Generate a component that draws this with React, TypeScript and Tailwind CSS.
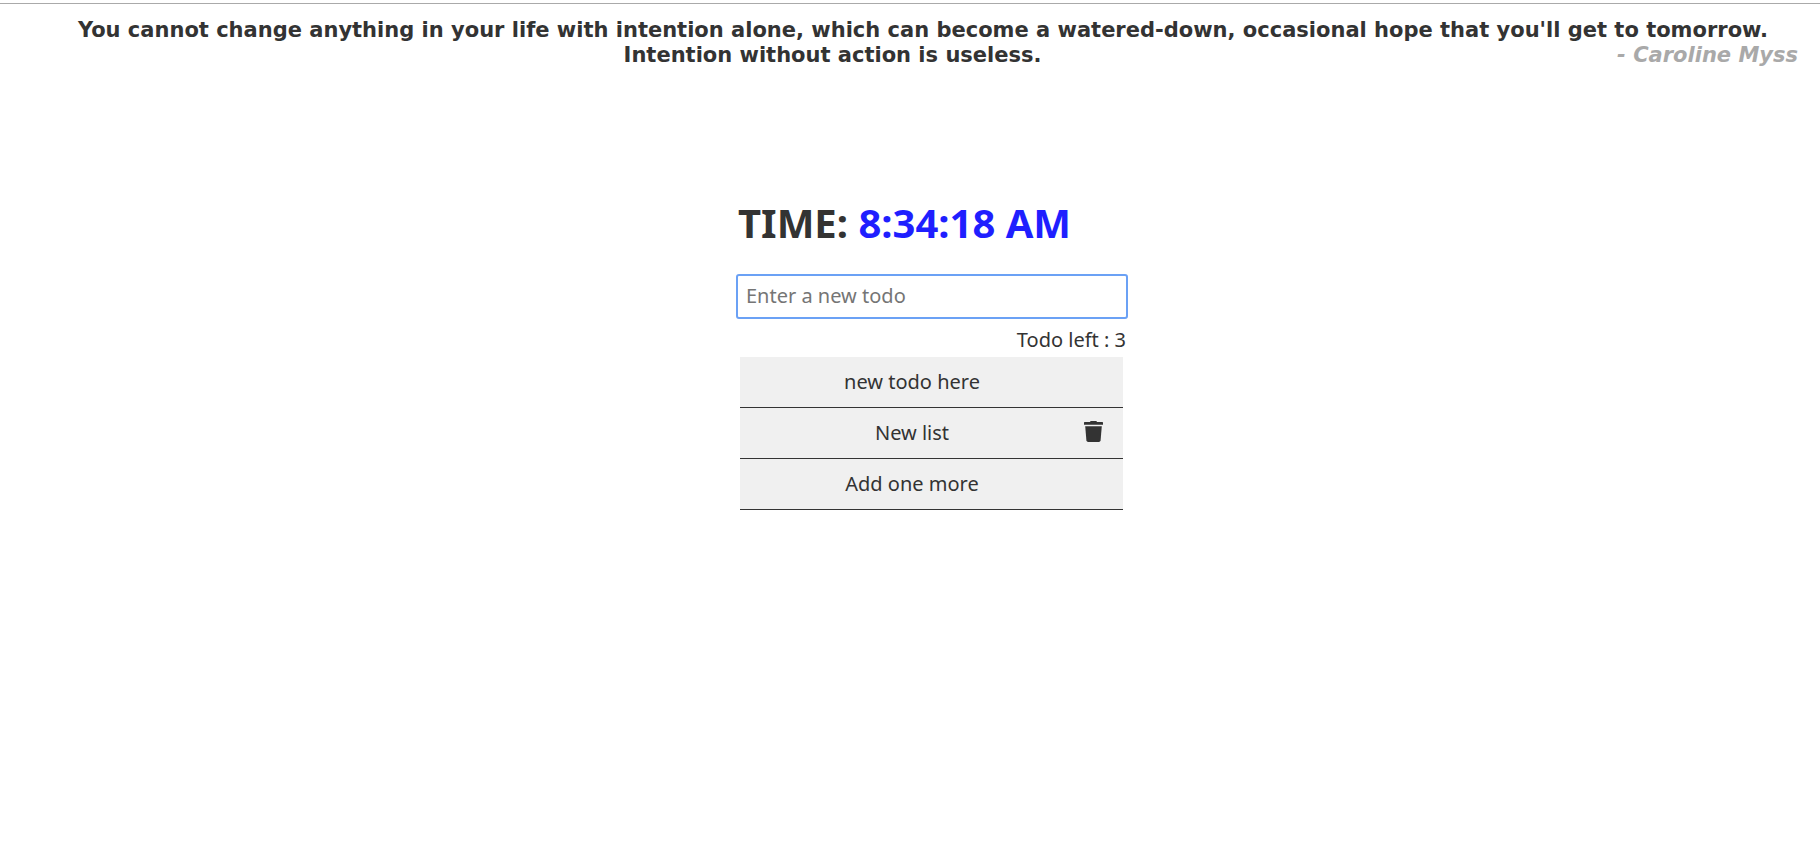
import { useState } from 'react';

type Todo = { id: number; title: string; removable: boolean };

const initialTodos: Todo[] = [
  { id: 1, title: 'new todo here', removable: false },
  { id: 2, title: 'New list', removable: true },
  { id: 3, title: 'Add one more', removable: false },
];

function TrashIcon() {
  return (
    <svg viewBox="0 0 19 21" className="h-[21px] w-[19px]" fill="currentColor" aria-hidden="true">
      <path d="M6 1Q6.2 0 7 0H12Q12.8 0 13 1H18.4Q19 1 19 1.7V3.8H0V1.7Q0 1 0.6 1Z" />
      <path d="M1.2 5.2H17.8L16.6 19.3Q16.4 21 14.8 21H4.2Q2.6 21 2.4 19.3Z" />
    </svg>
  );
}

function Quote() {
  return (
    <blockquote className="mt-3.5 flow-root pr-[22px] pl-12 text-center font-['DejaVu_Sans',sans-serif] text-[21px] leading-[25px] font-bold">
      <span>
        You cannot change anything in your life with intention alone, which can become a
        watered-down, occasional hope that you'll get to tomorrow. Intention without action is
        useless.
      </span>
      <cite className="float-right text-[#a9a9a9] italic">- Caroline Myss</cite>
    </blockquote>
  );
}

export default function App() {
  const [todos, setTodos] = useState(initialTodos);
  const [draft, setDraft] = useState('');

  const addTodo = (event: React.FormEvent) => {
    event.preventDefault();
    const title = draft.trim();
    if (!title) return;
    setTodos([...todos, { id: Date.now(), title, removable: true }]);
    setDraft('');
  };

  return (
    <div className="min-h-screen bg-white pt-[3px] font-['Noto_Sans',sans-serif] text-xl text-[#333333]">
      <header className="border-t border-[#aaaaaa]">
        <Quote />
      </header>

      <main className="mt-32 flex justify-center pl-11">
        <div className="w-full max-w-[392px]">
          <h1 className="pl-0.5 text-[40px] leading-[54px] font-bold">
            TIME: <span className="text-[#1f1fff]">8:34:18 AM</span>
          </h1>

          <form onSubmit={addTodo} className="mt-6">
            <input
              type="text"
              aria-label="New todo"
              placeholder="Enter a new todo"
              value={draft}
              onChange={(event) => setDraft(event.target.value)}
              className="block h-[45px] w-full rounded-[3px] border-2 border-[#6ba1f5] px-2 pb-0.5 placeholder-[#757575] outline-none"
            />
          </form>

          <p className="mt-1.5 mb-[3px] pr-0.5 text-right leading-[29px]">
            Todo left : {todos.length}
          </p>

          <ul className="mr-[5px] ml-1">
            {todos.map((todo) => (
              <li
                key={todo.id}
                className="flex h-[51px] items-center border-b border-[#333333] bg-[#f0f0f0]"
              >
                <span className="flex-1 text-center">{todo.title}</span>
                <span className="flex w-[39px] pb-1">
                  {todo.removable && (
                    <button
                      type="button"
                      aria-label={'Delete ' + todo.title}
                      onClick={() => setTodos(todos.filter((item) => item.id !== todo.id))}
                    >
                      <TrashIcon />
                    </button>
                  )}
                </span>
              </li>
            ))}
          </ul>
        </div>
      </main>
    </div>
  );
}
